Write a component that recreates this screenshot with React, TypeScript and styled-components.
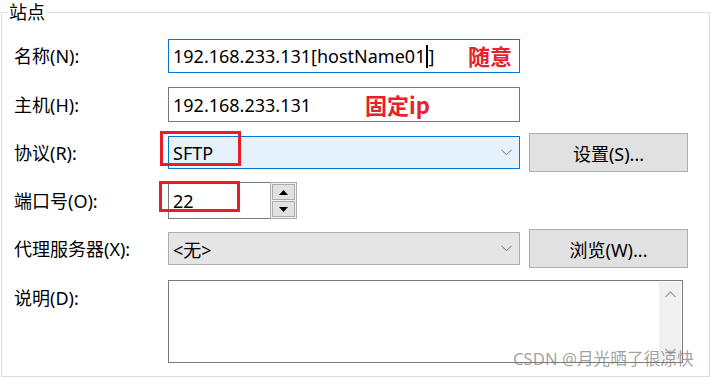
import React from "react";
import styled, { createGlobalStyle } from "styled-components";

const GlobalStyle = createGlobalStyle`
  html, body { margin: 0; padding: 0; background: #ffffff; }
  body {
    font-family: "Noto Sans", "Noto Sans CJK SC", sans-serif;
    font-size: 18px;
    color: #000;
  }
`;

const Page = styled.div`
  position: relative;
  width: 710px;
  height: 378px;
  overflow: hidden;
`;

const Group = styled.fieldset`
  margin: 1px 0 0 1px;
  width: 709px;
  height: 376px;
  box-sizing: border-box;
  border: 1px solid #dcdcdc;
  padding: 0 0 0 12px;
  min-width: 0;
`;

const Legend = styled.legend`
  margin-left: -6px;
  padding: 0 1px;
  font-size: 18px;
  line-height: 22px;
`;

const Row = styled.div<{ $h: number; $mt: number }>`
  display: grid;
  grid-template-columns: 145px 352px 159px;
  column-gap: 9px;
  align-items: center;
  height: ${(p) => p.$h}px;
  margin-top: ${(p) => p.$mt}px;
`;

const Label = styled.div<{ $top?: boolean }>`
  font-size: 18px;
  line-height: 24px;
  white-space: nowrap;
  align-self: ${(p) => (p.$top ? "start" : "center")};
  margin-top: ${(p) => (p.$top ? "6px" : "0")};
`;

const TextBox = styled.div<{ $focused?: boolean; $h: number }>`
  position: relative;
  box-sizing: border-box;
  height: ${(p) => p.$h}px;
  border: 1px solid ${(p) => (p.$focused ? "#0078d7" : "#7a7a7a")};
  background: #fff;
  display: flex;
  align-items: center;
  padding-left: 4px;
  font-size: 18px;
  white-space: nowrap;
`;

const Caret = styled.span`
  display: inline-block;
  width: 2px;
  height: 23px;
  background: #000;
  margin: 0 0 0 1px;
`;

const Note = styled.span<{ $left: number }>`
  position: absolute;
  left: ${(p) => p.$left}px;
  top: 50%;
  transform: translateY(-52%);
  color: #e8202a;
  font-weight: 700;
  font-size: 22px;
  line-height: 26px;
  font-family: "Noto Sans CJK SC", "Noto Sans", sans-serif;
`;

const Combo = styled.div<{ $active?: boolean }>`
  position: relative;
  box-sizing: border-box;
  height: 33px;
  border: 1px solid ${(p) => (p.$active ? "#0078d7" : "#adadad")};
  background: ${(p) => (p.$active ? "#e5f1fb" : "#e5e5e5")};
  display: flex;
  align-items: center;
  justify-content: space-between;
  padding: 0 7px 0 4px;
  font-size: 18px;
`;

const Chevron = () => (
  <svg width="11" height="7" viewBox="0 0 11 7">
    <path d="M0.5 0.8 L5.5 5.8 L10.5 0.8" fill="none" stroke="#707070" strokeWidth="1" />
  </svg>
);

const Button = styled.div`
  box-sizing: border-box;
  height: 39px;
  border: 1px solid #adadad;
  background: #e1e1e1;
  display: flex;
  align-items: center;
  justify-content: center;
  font-size: 18px;
`;

const Highlight = styled.div<{ $top: number; $h: number }>`
  position: absolute;
  left: -9px;
  top: ${(p) => p.$top}px;
  width: 81px;
  height: ${(p) => p.$h}px;
  box-sizing: border-box;
  border: 3px solid #e81e25;
  pointer-events: none;
`;

const SpinWrap = styled.div`
  position: relative;
  display: flex;
  height: 37px;
`;

const SpinInput = styled(TextBox)`
  width: 102px;
  border-right: none;
`;

const SpinButtons = styled.div`
  box-sizing: border-box;
  width: 27px;
  height: 37px;
  border: 1px solid #adadad;
  background: #f0f0f0;
  display: flex;
  flex-direction: column;
  gap: 1px;
  padding: 1px;
`;

const SpinButton = styled.div`
  flex: 1;
  box-sizing: border-box;
  border: 1px solid #adadad;
  background: #e1e1e1;
  display: flex;
  align-items: center;
  justify-content: center;
`;

const Tri = ({ up }: { up?: boolean }) => (
  <svg width="9" height="5" viewBox="0 0 9 5">
    <path d={up ? "M0 5 L4.5 0 L9 5 Z" : "M0 0 L4.5 5 L9 0 Z"} fill="#000" />
  </svg>
);

const Memo = styled.div`
  grid-column: 2 / span 2;
  width: 515px;
  box-sizing: border-box;
  height: 83px;
  border: 1px solid #7a7a7a;
  background: #fff;
  align-self: start;
  display: flex;
  justify-content: flex-end;
  padding: 1px;
`;

const ScrollBar = styled.div`
  width: 22px;
  background: #f0f0f0;
  display: flex;
  flex-direction: column;
  justify-content: space-between;
  align-items: center;
  padding: 9px 0 6px;
`;

const ScrollArrow = ({ up }: { up?: boolean }) => (
  <svg width="11" height="7" viewBox="0 0 11 7">
    <path
      d={up ? "M0.5 6 L5.5 1 L10.5 6" : "M0.5 1 L5.5 6 L10.5 1"}
      fill="none"
      stroke="#a6a6a6"
      strokeWidth="1.5"
    />
  </svg>
);

const Watermark = styled.div`
  position: absolute;
  left: 513px;
  top: 348px;
  font-family: "Noto Sans", "Noto Sans CJK SC", sans-serif;
  font-size: 16.7px;
  line-height: 22px;
  color: rgba(120, 120, 120, 0.7);
  white-space: nowrap;
  pointer-events: none;
`;

export default function App() {
  return (
    <Page>
      <GlobalStyle />
      <Group>
        <Legend>站点</Legend>
        <Row $h={34} $mt={16}>
          <Label>名称(N):</Label>
          <TextBox $focused $h={34}>
            192.168.233.131[hostName01<Caret />]
            <Note $left={299}>随意</Note>
          </TextBox>
        </Row>
        <Row $h={35} $mt={14}>
          <Label>主机(H):</Label>
          <TextBox $h={35}>
            192.168.233.131
            <Note $left={196}>固定ip</Note>
          </TextBox>
        </Row>
        <Row $h={39} $mt={11}>
          <Label>协议(R):</Label>
          <Combo $active>
            <span>SFTP</span>
            <Chevron />
            <Highlight $top={-6} $h={35} />
          </Combo>
          <Button>设置(S)...</Button>
        </Row>
        <Row $h={37} $mt={10}>
          <Label>端口号(O):</Label>
          <SpinWrap>
            <SpinInput $h={37}>22</SpinInput>
            <SpinButtons>
              <SpinButton>
                <Tri up />
              </SpinButton>
              <SpinButton>
                <Tri />
              </SpinButton>
            </SpinButtons>
            <Highlight $top={-1} $h={31} />
          </SpinWrap>
        </Row>
        <Row $h={39} $mt={10}>
          <Label>代理服务器(X):</Label>
          <Combo>
            <span>&lt;无&gt;</span>
            <Chevron />
          </Combo>
          <Button>浏览(W)...</Button>
        </Row>
        <Row $h={83} $mt={12}>
          <Label $top>说明(D):</Label>
          <Memo>
            <ScrollBar>
              <ScrollArrow up />
              <ScrollArrow />
            </ScrollBar>
          </Memo>
        </Row>
      </Group>
      <Watermark>CSDN @月光晒了很凉快</Watermark>
    </Page>
  );
}
